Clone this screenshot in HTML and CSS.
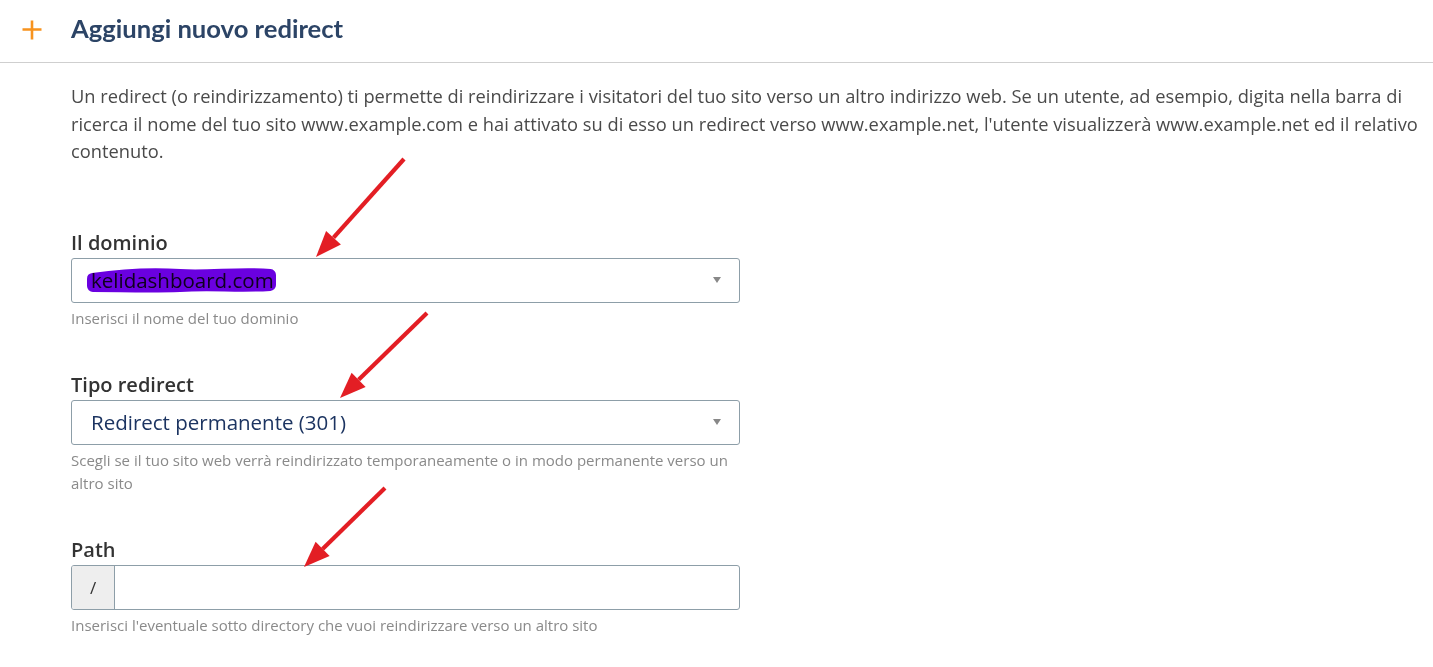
FILE: index.html
```html
<!DOCTYPE html>
<html lang="it">
<head>
<meta charset="utf-8">
<title>Aggiungi nuovo redirect</title>
<link rel="stylesheet" href="styles.css">
</head>
<body>
<div class="page">
  <header class="header">
    <span class="plus" aria-hidden="true">
      <svg width="20" height="20" viewBox="0 0 20 20"><path d="M10 0.5V19.5M0.5 9.5H19.5" stroke="#f7931e" stroke-width="2.6" fill="none"/></svg>
    </span>
    <h1 class="title">Aggiungi nuovo redirect</h1>
  </header>
  <main class="content">
    <p class="intro">Un redirect (o reindirizzamento) ti permette di reindirizzare i visitatori del tuo sito verso un altro indirizzo web. Se un utente, ad esempio, digita nella barra di ricerca il nome del tuo sito www.example.com e hai attivato su di esso un redirect verso www.example.net, l'utente visualizzerà www.example.net ed il relativo contenuto.</p>

    <div class="group">
      <label class="label">Il dominio</label>
      <div class="select">
        <span class="value domain">kelidashboard.com</span>
        <span class="caret"></span>
      </div>
      <div class="help">Inserisci il nome del tuo dominio</div>
    </div>

    <div class="group">
      <label class="label">Tipo redirect</label>
      <div class="select">
        <span class="value type">Redirect permanente (301)</span>
        <span class="caret"></span>
      </div>
      <div class="help">Scegli se il tuo sito web verrà reindirizzato temporaneamente o in modo permanente verso un altro sito</div>
    </div>

    <div class="group">
      <label class="label">Path</label>
      <div class="input-group">
        <span class="addon">/</span>
        <span class="input"></span>
      </div>
      <div class="help">Inserisci l'eventuale sotto directory che vuoi reindirizzare verso un altro sito</div>
    </div>
  </main>

  <svg class="overlay" width="1433" height="667" viewBox="0 0 1433 667" aria-hidden="true">
    <path class="scribble" d="M93 279 C120 275 150 273 180 275 C210 277 240 272 270 275 L270 285 C240 287 210 284 180 286 C150 287 120 286 93 286 Z" />
    <g class="arrow">
      <line x1="404" y1="159" x2="333.5" y2="237.7"/>
      <polygon points="316,257 340.9,244.4 326.1,231.0"/>
    </g>
    <g class="arrow">
      <line x1="427" y1="313" x2="358.6" y2="379.8"/>
      <polygon points="340,398 365.6,387.0 351.6,372.7"/>
    </g>
    <g class="arrow">
      <line x1="385" y1="488" x2="322.6" y2="548.9"/>
      <polygon points="304,567 329.6,556.1 315.6,541.7"/>
    </g>
  </svg>
</div>
</body>
</html>
```

FILE: styles.css
```css
* { box-sizing: border-box; }
html, body { margin: 0; padding: 0; background: #fff; }
body { font-family: "Open Sans", "Liberation Sans", sans-serif; }

.page { position: relative; width: 1433px; height: 667px; overflow: hidden; }

.header {
  height: 63px;
  border-bottom: 1px solid #cfcfcf;
  display: flex;
  align-items: center;
  padding-left: 22px;
}
.plus { width: 20px; height: 20px; display: flex; margin-top: -3px; }
.title {
  margin: -4px 0 0 29px;
  font-family: Lato, "Open Sans", sans-serif;
  font-weight: 700;
  font-size: 25.6px;
  color: #2c4466;
  line-height: 1;
}

.content { padding: 19px 10px 0 71px; }
.intro {
  margin: 0;
  font-size: 18.3px;
  line-height: 27.5px;
  color: #4a4a4a;
}

.group { width: 669px; margin-top: 66px; }
.group + .group { margin-top: 42.5px; }

.label {
  display: block;
  font-size: 20px;
  font-weight: 600;
  line-height: 24px;
  color: #333;
  margin-bottom: 3px;
}

.select, .input-group {
  height: 45px;
  border: 1px solid #8d9ea8;
  border-radius: 3px;
  display: flex;
  align-items: center;
  background: #fff;
}
.select { padding-left: 19px; padding-right: 18px; }
.value { flex: 1; font-size: 20.5px; line-height: 24px; }
.domain { color: #222; }
.type { color: #1c3461; font-weight: 500; }
.caret {
  width: 0; height: 0;
  border-left: 4.5px solid transparent;
  border-right: 4.5px solid transparent;
  border-top: 6px solid #888;
}

.addon {
  width: 43px;
  height: 100%;
  background: #eee;
  border-right: 1px solid #8d9ea8;
  border-radius: 2px 0 0 2px;
  display: flex;
  align-items: center;
  justify-content: center;
  font-size: 17px;
  color: #333;
}
.input { flex: 1; }

.help {
  margin-top: 4.5px;
  font-size: 15px;
  line-height: 23px;
  color: #8a8a8a;
}

.overlay { position: absolute; left: 0; top: 0; pointer-events: none; }
.scribble { fill: #6a00e0; stroke: #6a00e0; stroke-width: 12; stroke-linejoin: round; mix-blend-mode: multiply; }
.arrow line { stroke: #e31e24; stroke-width: 4.2; stroke-linecap: butt; }
.arrow polygon { fill: #e31e24; }
```
